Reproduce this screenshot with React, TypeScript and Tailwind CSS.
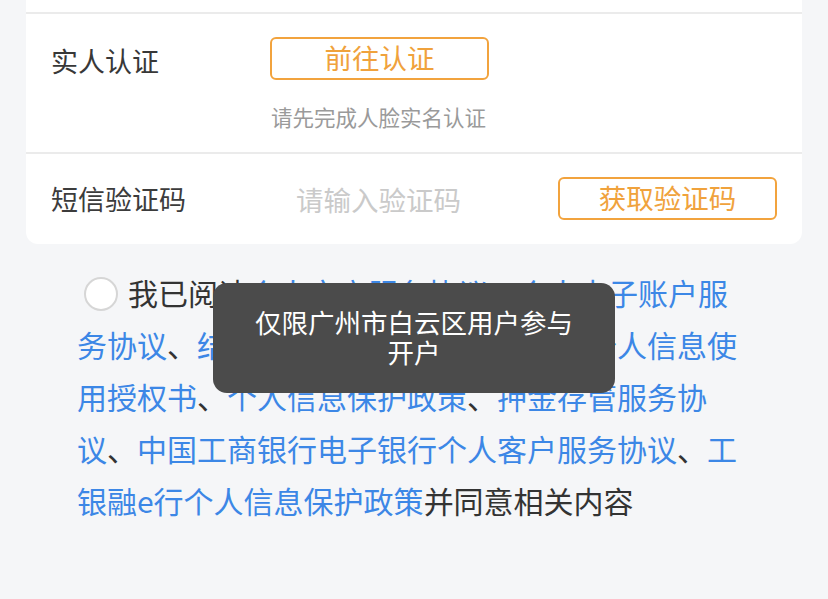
import React from 'react';

const FONT = { fontFamily: '"Noto Sans CJK SC", "Noto Sans", sans-serif' };

const LINKS = [
  '个人客户服务协议',
  '个人电子账户服务协议',
  '结算账户协议、存款协议书',
  '个人信息使用授权书',
  '个人信息保护政策',
  '押金存管服务协议',
  '中国工商银行电子银行个人客户服务协议',
  '工银融e行个人信息保护政策',
];

function OutlineButton({ label }: { label: string }) {
  return (
    <button className="flex h-[43px] w-[219px] items-center justify-center rounded-[6px] border-2 border-[#f2a33d] bg-white pb-[1px] text-[27.5px] leading-none text-[#f0a23c]">
      {label}
    </button>
  );
}

export default function App() {
  return (
    <div className="relative min-h-screen bg-[#f5f6f8]" style={FONT}>
      {/* form card */}
      <div className="mx-[26px] rounded-b-[12px] bg-white">
        <div className="h-[12px]" />

        {/* real-person verification */}
        <div className="border-t-2 border-[#ebebeb] px-[25px] pt-[21px] pb-[20px]">
          <div className="flex items-center">
            <div className="w-[219px] pt-[6px] text-[27px] text-[#383838]">实人认证</div>
            <OutlineButton label="前往认证" />
          </div>
          <div className="ml-[220px] mt-[20px] text-[21.5px] leading-[30px] text-[#9a9a9a]">
            请先完成人脸实名认证
          </div>
        </div>

        {/* sms code */}
        <div className="flex h-[92px] items-center border-t-2 border-[#ebebeb] px-[25px]">
          <div className="w-[245px] pt-[2px] text-[27px] text-[#3c3c3c]">短信验证码</div>
          <div className="flex-1 pt-[2px] text-[27.5px] text-[#cacaca]">请输入验证码</div>
          <OutlineButton label="获取验证码" />
        </div>
      </div>

      {/* agreement */}
      <div className="ml-[77px] mt-[22px] w-[664px] text-[30px] leading-[52px] text-[#333]">
        <span className="mb-[-6px] ml-[7px] mr-[10px] inline-block h-[34px] w-[34px] rounded-full border-2 border-[#d6d6d6] bg-white align-baseline" />
        我已阅读
        {LINKS.map((l, i) => (
          <React.Fragment key={l}>
            {i > 0 && '、'}
            {l.split('、').map((part, j) => (
              <React.Fragment key={part}>
                {j > 0 && '、'}
                <span className="text-[#3c87e6]">{part}</span>
              </React.Fragment>
            ))}
          </React.Fragment>
        ))}
        并同意相关内容
      </div>

      {/* toast */}
      <div className="absolute left-[213px] top-[283px] flex h-[110px] w-[402px] items-center justify-center rounded-[14px] bg-[#4b4b4b] px-[38px] pb-[2px] text-center text-[26.5px] leading-[30px] text-white">
        仅限广州市白云区用户参与开户
      </div>
    </div>
  );
}
